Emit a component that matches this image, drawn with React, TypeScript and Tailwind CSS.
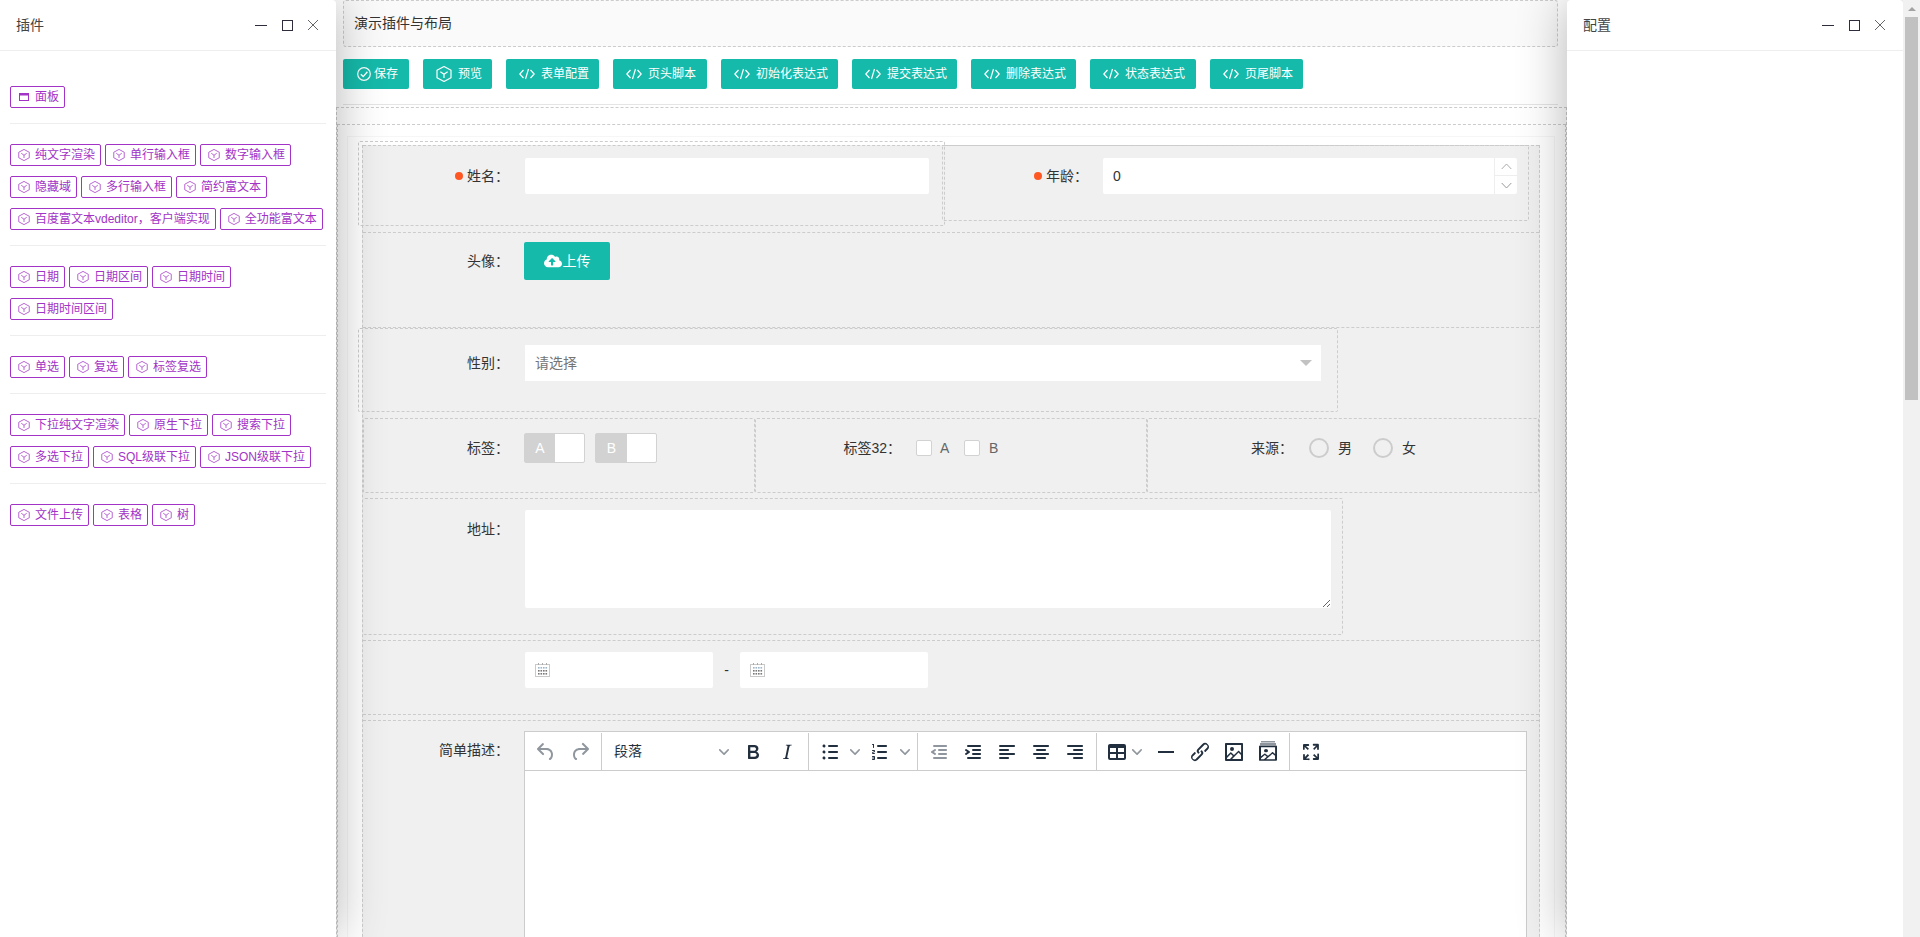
import React from "react";
import { FaCloudUploadAlt } from "react-icons/fa";

const Cube = ({ size = 12, cls = "" }: { size?: number; cls?: string }) => (
  <svg width={size} height={size} viewBox="0 0 24 24" fill="none" stroke="currentColor" strokeWidth={size > 12 ? 1.8 : 1.5} strokeLinejoin="round" className={`shrink-0 ${cls}`}>
    <path d="M12 .8 22.5 6.5v11L12 23.2 1.5 17.5v-11z" />
    <path d="M6.5 8.5 12 12.5l5.5-4M12 12.5V18" />
  </svg>
);

const PanelIcon = () => (
  <svg width="12" height="12" viewBox="0 0 12 12" fill="none" className="shrink-0">
    <rect x="1.5" y="2.5" width="9" height="7" stroke="currentColor" />
    <rect x="1" y="2" width="10" height="2.5" fill="currentColor" />
  </svg>
);

const CodeIcon = () => (
  <svg width="16" height="12" viewBox="0 0 16 12" fill="none" stroke="white" strokeWidth="1.2" className="shrink-0">
    <path d="M4.5 2 .8 6l3.7 4M11.5 2l3.7 4-3.7 4M9.5 1 6.5 11" />
  </svg>
);

const CheckCircle = () => (
  <svg width="14" height="14" viewBox="0 0 14 14" fill="none" stroke="white" strokeWidth="1.2" className="shrink-0">
    <circle cx="7" cy="7" r="6.3" />
    <path d="M3.8 7.2 6.2 9.6 10.4 4.8" strokeWidth="1.4" />
  </svg>
);

const Calendar = () => (
  <svg width="15" height="14" viewBox="0 0 15 14" className="shrink-0">
    <rect x="0.5" y="1.5" width="14" height="12" fill="#fff" stroke="#c9c9c9" />
    <rect x="3" y="0" width="1" height="2" fill="#aaa" />
    <rect x="7" y="0" width="1" height="2" fill="#aaa" />
    <rect x="11" y="0" width="1" height="2" fill="#aaa" />
    {[4, 7, 10].map((y) =>
      [3, 5.5, 8, 10.5].map((x) => <rect key={`${x}-${y}`} x={x} y={y} width="1.6" height="1.6" fill={y === 4 ? "#9fb6c9" : "#777"} />)
    )}
  </svg>
);

const WindowControls = () => (
  <div className="flex items-center">
    <span className="w-[12px] h-[1px] bg-[#2e2d3c]" />
    <span className="ml-[15px] w-[11px] h-[11px] border border-[#2e2d3c]" />
    <svg width="12" height="12" viewBox="0 0 12 12" className="ml-[14px]" stroke="#666" strokeWidth="1" fill="none">
      <path d="M1 1l10 10M11 1 1 11" />
    </svg>
  </div>
);

const PanelHeader = ({ title }: { title: string }) => (
  <div className="h-[51px] shrink-0 border-b border-[#eee] flex items-center justify-between pl-[16px] pr-[17px] text-[14px] text-[#444]">
    <span>{title}</span>
    <WindowControls />
  </div>
);

const Plugin = ({ name, panel }: { name: string; panel?: boolean }) => (
  <div className="h-[22px] flex items-center border border-[#a233c6] rounded-[2px] pl-[7px] pr-[5px] text-[12px] leading-none text-[#a233c6] whitespace-nowrap">
    {panel ? <PanelIcon /> : <Cube />}
    <span className="ml-[5px]">{name}</span>
  </div>
);

const groups = [
  ["纯文字渲染", "单行输入框", "数字输入框", "隐藏域", "多行输入框", "简约富文本", "百度富文本vdeditor，客户端实现", "全功能富文本"],
  ["日期", "日期区间", "日期时间", "日期时间区间"],
  ["单选", "复选", "标签复选"],
  ["下拉纯文字渲染", "原生下拉", "搜索下拉", "多选下拉", "SQL级联下拉", "JSON级联下拉"],
  ["文件上传", "表格", "树"],
];

const ToolButton = ({ label, icon, cls }: { label: string; icon: React.ReactNode; cls: string }) => (
  <button className={`h-[30px] shrink-0 flex items-center bg-[#16baaa] rounded-[2px] text-white text-[12px] whitespace-nowrap ${cls}`}>
    {icon}
    <span>{label}</span>
  </button>
);

const Label = ({ text, cls, required }: { text: string; cls: string; required?: boolean }) => (
  <div className={`flex items-center justify-end shrink-0 text-[14px] text-[#333] ${cls}`}>
    {required && <span className="w-[8px] h-[8px] rounded-full bg-[#ff5722] mr-[4px]" />}
    <span>{text}</span>
  </div>
);

const paths = {
  undo: "M6.4 8H12c3.7 0 6.2 2 6.8 5.1.6 2.7-.4 5.6-2.3 6.8a1 1 0 0 1-1-1.8c1.1-.6 1.8-2.7 1.4-4.6-.5-2.1-2.1-3.5-4.9-3.5H6.4l3.3 3.3a1 1 0 1 1-1.4 1.4l-5-5a1 1 0 0 1 0-1.4l5-5a1 1 0 0 1 1.4 1.4L6.4 8z",
  redo: "M17.6 10H12c-2.8 0-4.4 1.4-4.9 3.5-.4 2 .3 4 1.4 4.6a1 1 0 1 1-1 1.8c-2-1.2-2.9-4.1-2.3-6.8.6-3 3-5.1 6.8-5.1h5.6l-3.3-3.3a1 1 0 1 1 1.4-1.4l5 5a1 1 0 0 1 0 1.4l-5 5a1 1 0 0 1-1.4-1.4l3.3-3.3z",
  bold: "M7.8 19c-.3 0-.5 0-.6-.2l-.2-.5V5.7c0-.2 0-.4.2-.5l.6-.2h5c1.5 0 2.7.3 3.5 1 .7.6 1.1 1.4 1.1 2.5a3 3 0 0 1-.6 1.9c-.4.6-1 1-1.6 1.2.4.1.9.3 1.3.6s.8.7 1 1.2c.4.4.5 1 .5 1.6 0 1.3-.4 2.3-1.3 3-.8.7-2.1 1-3.8 1H7.8zm5-8.3c.6 0 1.2-.1 1.6-.5.4-.3.6-.7.6-1.3 0-1.1-.8-1.7-2.3-1.7H9.3v3.5h3.4zm.5 6c.7 0 1.3-.1 1.7-.4.4-.4.6-.9.6-1.5s-.2-1-.7-1.4c-.4-.3-1-.4-2-.4H9.4v3.8h4z",
  italic: "M16.7 4.7l-.1.9h-.3c-.6 0-1 0-1.4.3-.3.3-.4.6-.5 1.1l-2.1 9.8v.6c0 .5.4.8 1.4.8h.2l-.2.8H8l.2-.8h.2c1.1 0 1.8-.5 2-1.5l2-9.8.1-.5c0-.6-.4-.8-1.4-.8h-.3l.2-.9h5.8z",
  ul: "M11 5h8c.6 0 1 .4 1 1s-.4 1-1 1h-8a1 1 0 0 1 0-2zm0 6h8c.6 0 1 .4 1 1s-.4 1-1 1h-8a1 1 0 0 1 0-2zm0 6h8c.6 0 1 .4 1 1s-.4 1-1 1h-8a1 1 0 0 1 0-2zM4.5 6c0-.4.1-.8.4-1 .3-.4.7-.5 1.1-.5.4 0 .8.1 1 .4.4.3.5.7.5 1.1 0 .4-.1.8-.4 1-.3.4-.7.5-1.1.5-.4 0-.8-.1-1-.4-.4-.3-.5-.7-.5-1.1zm0 6c0-.4.1-.8.4-1 .3-.4.7-.5 1.1-.5.4 0 .8.1 1 .4.4.3.5.7.5 1.1 0 .4-.1.8-.4 1-.3.4-.7.5-1.1.5-.4 0-.8-.1-1-.4-.4-.3-.5-.7-.5-1.1zm0 6c0-.4.1-.8.4-1 .3-.4.7-.5 1.1-.5.4 0 .8.1 1 .4.4.3.5.7.5 1.1 0 .4-.1.8-.4 1-.3.4-.7.5-1.1.5-.4 0-.8-.1-1-.4-.4-.3-.5-.7-.5-1.1z",
  ol: "M10 17h8c.6 0 1 .4 1 1s-.4 1-1 1h-8a1 1 0 0 1 0-2zm0-6h8c.6 0 1 .4 1 1s-.4 1-1 1h-8a1 1 0 0 1 0-2zm0-6h8c.6 0 1 .4 1 1s-.4 1-1 1h-8a1 1 0 1 1 0-2zM6 4v3.5c0 .3-.2.5-.5.5a.5.5 0 0 1-.5-.5V5h-.5a.5.5 0 0 1 0-1H6zm-1 8.8l.2.2h1.3c.3 0 .5.2.5.5s-.2.5-.5.5H4.9a1 1 0 0 1-.9-1V13c0-.4.3-.8.6-1l1.2-.4.2-.3a.2.2 0 0 0-.2-.2H4.5a.5.5 0 0 1-.5-.5c0-.3.2-.5.5-.5h1.6c.5 0 .9.4.9 1v.1c0 .4-.3.8-.6 1l-1.2.4-.2.3zM7 17v2c0 .6-.4 1-1 1H4.5a.5.5 0 0 1 0-1h1.2c.2 0 .3-.1.3-.3 0-.2-.1-.3-.3-.3H4.4a.4.4 0 1 1 0-.8h1.3c.2 0 .3-.1.3-.3 0-.2-.1-.3-.3-.3H4.5a.5.5 0 1 1 0-1H6c.6 0 1 .4 1 1z",
  outdent: "M7 5h12c.6 0 1 .4 1 1s-.4 1-1 1H7a1 1 0 1 1 0-2zm5 4h7c.6 0 1 .4 1 1s-.4 1-1 1h-7a1 1 0 0 1 0-2zm0 4h7c.6 0 1 .4 1 1s-.4 1-1 1h-7a1 1 0 0 1 0-2zm-5 4h12a1 1 0 0 1 0 2H7a1 1 0 0 1 0-2zm1.6-3.8a1 1 0 0 1-1.2 1.6l-3-2a1 1 0 0 1 0-1.6l3-2a1 1 0 0 1 1.2 1.6L6.8 12l1.8 1.2z",
  indent: "M7 5h12c.6 0 1 .4 1 1s-.4 1-1 1H7a1 1 0 1 1 0-2zm5 4h7c.6 0 1 .4 1 1s-.4 1-1 1h-7a1 1 0 0 1 0-2zm0 4h7c.6 0 1 .4 1 1s-.4 1-1 1h-7a1 1 0 0 1 0-2zm-5 4h12a1 1 0 0 1 0 2H7a1 1 0 0 1 0-2zm-2.6-3.8L6.2 12l-1.8-1.2a1 1 0 0 1 1.2-1.6l3 2a1 1 0 0 1 0 1.6l-3 2a1 1 0 1 1-1.2-1.6z",
  left: "M5 5h14c.6 0 1 .4 1 1s-.4 1-1 1H5a1 1 0 1 1 0-2zm0 4h8c.6 0 1 .4 1 1s-.4 1-1 1H5a1 1 0 1 1 0-2zm0 8h8c.6 0 1 .4 1 1s-.4 1-1 1H5a1 1 0 0 1 0-2zm0-4h14c.6 0 1 .4 1 1s-.4 1-1 1H5a1 1 0 0 1 0-2z",
  center: "M5 5h14c.6 0 1 .4 1 1s-.4 1-1 1H5a1 1 0 1 1 0-2zm3 4h8c.6 0 1 .4 1 1s-.4 1-1 1H8a1 1 0 1 1 0-2zm0 8h8c.6 0 1 .4 1 1s-.4 1-1 1H8a1 1 0 0 1 0-2zm-3-4h14c.6 0 1 .4 1 1s-.4 1-1 1H5a1 1 0 0 1 0-2z",
  right: "M5 5h14c.6 0 1 .4 1 1s-.4 1-1 1H5a1 1 0 1 1 0-2zm6 4h8c.6 0 1 .4 1 1s-.4 1-1 1h-8a1 1 0 0 1 0-2zm0 8h8c.6 0 1 .4 1 1s-.4 1-1 1h-8a1 1 0 0 1 0-2zm-6-4h14c.6 0 1 .4 1 1s-.4 1-1 1H5a1 1 0 0 1 0-2z",
  table: "M19 4a2 2 0 0 1 2 2v12a2 2 0 0 1-2 2H5a2 2 0 0 1-2-2V6c0-1.1.9-2 2-2h14zM5 14v4h6v-4H5zm14 0h-6v4h6v-4zm0-6h-6v4h6V8zM5 12h6V8H5v4z",
  hr: "M4 11h16v2H4z",
  link: "M6.2 12.3a1 1 0 0 1 1.4 1.4l-2 2a2 2 0 1 0 2.6 2.8l4.8-4.8a1 1 0 0 0 0-1.4 1 1 0 1 1 1.4-1.3 2.9 2.9 0 0 1 0 4L9.6 20a3.9 3.9 0 0 1-5.5-5.5l2-2zm11.6-.6a1 1 0 0 1-1.4-1.4l2-2a2 2 0 1 0-2.6-2.8L11 10.3a1 1 0 0 0 0 1.4 1 1 0 1 1-1.4 1.3 2.9 2.9 0 0 1 0-4L14.4 4a3.9 3.9 0 0 1 5.5 5.5l-2 2z",
  image: "M5 15.7l3.3-3.2c.3-.3.7-.3 1 0L12 15l4.1-4c.3-.4.8-.4 1 0l2 1.9V5H5v10.7zM5 18V19h3l2.8-2.9-2-2L5 17.9zm14-3l-2.5-2.4-6.4 6.5H19v-4zM4 3h16c.6 0 1 .4 1 1v16c0 .6-.4 1-1 1H4a1 1 0 0 1-1-1V4c0-.6.4-1 1-1zm6 8a2 2 0 1 0 0-4 2 2 0 0 0 0 4z",
  full: "M15.3 10l-1.2-1.3 2.9-3h-2.3a.9.9 0 1 1 0-1.9H19c.5 0 .9.4.9.9v4.4a.9.9 0 1 1-1.8 0V7l-2.9 3zm0 4l3 3v-2.3a.9.9 0 1 1 1.7 0V19c0 .5-.4.9-.9.9h-4.4a.9.9 0 1 1 0-1.8H17l-3-2.9 1.3-1.3zM10 15.4l-2.9 3h2.3a.9.9 0 1 1 0 1.7H5a.9.9 0 0 1-.9-.9v-4.4a.9.9 0 1 1 1.8 0V17l2.9-3 1.2 1.3zM8.7 10L5.7 7v2.3a.9.9 0 0 1-1.7 0V5c0-.5.4-.9.9-.9h4.4a.9.9 0 0 1 0 1.8H7l3 2.9L8.7 10z",
};

const Glyph = ({ d, off }: { d: string; off?: boolean }) => (
  <svg width="24" height="24" viewBox="0 0 24 24" fill="#222f3e" className={`shrink-0 ${off ? "opacity-50" : ""}`}>
    <path d={d} fillRule="evenodd" />
  </svg>
);

const Btn = ({ d, off }: { d: string; off?: boolean }) => (
  <div className="w-[34px] h-full flex items-center justify-center shrink-0">
    <Glyph d={d} off={off} />
  </div>
);

const Chevron = () => (
  <svg width="10" height="10" viewBox="0 0 10 10" fill="#222f3e" className="opacity-50 shrink-0">
    <path d="M8.7 2.2c.3-.3.8-.3 1 0 .4.4.4.9 0 1.2L5.7 7.8c-.3.3-.9.3-1.2 0L.2 3.4a.8.8 0 0 1 0-1.2c.3-.3.8-.3 1.1 0L5 6l3.7-3.8z" />
  </svg>
);

const EditorToolbar = () => (
  <div className="h-[38px] flex border-b border-[#ccc]">
    <div className="flex h-full pl-[4px] pr-[4px] border-r border-[#ccc]">
      <Btn d={paths.undo} off />
      <Btn d={paths.redo} off />
    </div>
    <div className="flex h-full px-[4px] border-r border-[#ccc]">
      <div className="w-[130px] flex items-center justify-between pl-[8px] pr-[7px] text-[14px] text-[#222f3e]">
        <span>段落</span>
        <Chevron />
      </div>
      <Btn d={paths.bold} />
      <Btn d={paths.italic} />
    </div>
    <div className="flex h-full pl-[4px] pr-[4px] border-r border-[#ccc]">
      <div className="w-[51px] flex items-center pl-[5px]">
        <Glyph d={paths.ul} />
        <span className="ml-[8px] flex"><Chevron /></span>
      </div>
      <div className="w-[49px] flex items-center pl-[4px]">
        <Glyph d={paths.ol} />
        <span className="ml-[8px] flex"><Chevron /></span>
      </div>
    </div>
    <div className="flex h-full px-[4px] border-r border-[#ccc]">
      <Btn d={paths.outdent} off />
      <Btn d={paths.indent} />
      <Btn d={paths.left} />
      <Btn d={paths.center} />
      <Btn d={paths.right} />
    </div>
    <div className="flex h-full px-[4px] border-r border-[#ccc]">
      <div className="w-[48px] flex items-center pl-[4px]">
        <Glyph d={paths.table} />
        <span className="ml-[3px] flex"><Chevron /></span>
      </div>
      <Btn d={paths.hr} />
      <Btn d={paths.link} />
      <Btn d={paths.image} />
      <div className="w-[34px] h-full flex items-center justify-center shrink-0">
        <svg width="24" height="24" viewBox="0 0 24 24" fill="#222f3e" className="shrink-0">
          <path d="M5 1.5h14v.8H5zM4 3.6h16v.8H4z" />
          <path transform="translate(0 3) scale(1 .85)" d={paths.image} fillRule="evenodd" />
        </svg>
      </div>
    </div>
    <div className="flex h-full px-[4px]">
      <Btn d={paths.full} />
    </div>
  </div>
);

export default function App() {
  return (
    <div className="w-[1920px] h-[937px] overflow-hidden flex bg-white text-[#333] text-[14px] [font-family:'Liberation_Sans','Noto_Sans_CJK_SC',sans-serif]">
      <aside className="relative z-10 w-[336px] shrink-0 h-full flex flex-col bg-white rounded-tr-[4px] shadow-[0_0_50px_rgba(0,0,0,0.3)]">
        <PanelHeader title="插件" />
        <div className="px-[10px] pt-[35px]">
          <div className="flex">
            <Plugin name="面板" panel />
          </div>
          {groups.map((g, i) => (
            <div key={i}>
              <div className="h-[1px] bg-[#eee] mt-[15px] mb-[20px]" />
              <div className="flex flex-wrap gap-x-[4px] gap-y-[10px]">
                {g.map((n) => (
                  <Plugin key={n} name={n} />
                ))}
              </div>
            </div>
          ))}
        </div>
      </aside>

      <main className="w-[1231px] shrink-0 h-full overflow-hidden">
        <div className="pl-[7px] pr-[9px]">
          <div className="h-[47px] border border-dashed border-[#ccc] rounded-[3px] bg-[#fafafa] flex items-center pl-[10px] text-[14px] text-[#333]">
            演示插件与布局
          </div>
          <div className="mt-[12px] pb-[15px] border-b border-[#e5e5e5] flex gap-[14px]">
            <ToolButton label="保存" cls="w-[66px] pl-[14px] gap-[3px]" icon={<CheckCircle />} />
            <ToolButton label="预览" cls="w-[69px] pl-[13px] gap-[6px]" icon={<Cube size={16} />} />
            <ToolButton label="表单配置" cls="w-[93px] pl-[13px] gap-[6px]" icon={<CodeIcon />} />
            <ToolButton label="页头脚本" cls="w-[94px] pl-[13px] gap-[6px]" icon={<CodeIcon />} />
            <ToolButton label="初始化表达式" cls="w-[117px] pl-[13px] gap-[6px]" icon={<CodeIcon />} />
            <ToolButton label="提交表达式" cls="w-[105px] pl-[13px] gap-[6px]" icon={<CodeIcon />} />
            <ToolButton label="删除表达式" cls="w-[105px] pl-[13px] gap-[6px]" icon={<CodeIcon />} />
            <ToolButton label="状态表达式" cls="w-[106px] pl-[13px] gap-[6px]" icon={<CodeIcon />} />
            <ToolButton label="页尾脚本" cls="w-[93px] pl-[13px] gap-[6px]" icon={<CodeIcon />} />
          </div>
        </div>

        <div className="mt-[2px] border border-dashed border-[#ccc] pt-[16px]">
          <div className="border border-dashed border-[#ccc] pt-[11px] pl-[9px] pr-[10px]">
            <div className="border border-[#f6f6f6] pt-[8px] px-[14px]">
              <div className="bg-[#f0f0f0] border-x border-dashed border-[#ccc]">
                {/* row 1 */}
                <div className="h-[87px] border-t border-dashed border-[#ccc] flex items-start">
                  <div className="-mt-[5px] -ml-[5px] w-[587px] h-[85px] shrink-0 border border-dashed border-[#ccc] rounded-[2px] pt-[16px] flex">
                    <Label text="姓名：" cls="w-[150px] h-[36px]" required />
                    <input readOnly className="ml-[16px] w-[404px] h-[36px] bg-white rounded-[2px] outline-none" />
                  </div>
                  <div className="-mt-[1px] -ml-[3px] w-[587px] h-[76px] shrink-0 border border-dashed border-[#ccc] rounded-[2px] pt-[12px] flex">
                    <Label text="年龄：" cls="w-[145px] h-[36px]" required />
                    <div className="ml-[15px] w-[414px] h-[36px] bg-white rounded-[2px] flex">
                      <input readOnly defaultValue="0" className="flex-1 min-w-0 pl-[10px] text-[14px] text-[#333] bg-transparent outline-none" />
                      <div className="w-[23px] border-l border-[#eee] flex flex-col">
                        <div className="h-[18px] flex items-center justify-center border-b border-[#eee]">
                          <svg width="11" height="7" viewBox="0 0 11 7" fill="none" stroke="#aaa"><path d="M.7 6 5.5 1l4.8 5" /></svg>
                        </div>
                        <div className="flex-1 flex items-center justify-center">
                          <svg width="11" height="7" viewBox="0 0 11 7" fill="none" stroke="#999"><path d="M.7 1l4.8 5 4.8-5" /></svg>
                        </div>
                      </div>
                    </div>
                  </div>
                </div>

                {/* row 2 */}
                <div className="h-[95px] border-t border-dashed border-[#ccc] pt-[9px] flex">
                  <Label text="头像：" cls="w-[146px] h-[38px]" />
                  <button className="ml-[15px] w-[86px] h-[38px] bg-[#16baaa] rounded-[2px] text-white text-[14px] flex items-center justify-center gap-[1px]">
                    <FaCloudUploadAlt size={18} />
                    <span>上传</span>
                  </button>
                </div>

                {/* row 3 */}
                <div className="h-[91px] border-t border-dashed border-[#ccc]">
                  <div className="-ml-[5px] w-[980px] h-[84px] border border-dashed border-[#ccc] rounded-[2px] pt-[16px] flex">
                    <Label text="性别：" cls="w-[150px] h-[36px]" />
                    <div className="ml-[16px] w-[796px] h-[36px] bg-white flex items-center justify-between pl-[10px] pr-[9px] text-[14px] text-[#757575]">
                      <span>请选择</span>
                      <span className="w-0 h-0 border-x-[6px] border-x-transparent border-t-[6px] border-t-[#c2c2c2]" />
                    </div>
                  </div>
                </div>

                {/* row 4 */}
                <div className="h-[75px] mb-[5px] flex">
                  <div className="flex-1 border border-dashed border-[#ccc] rounded-[2px] pt-[14px] flex">
                    <Label text="标签：" cls="w-[145px] h-[30px]" />
                    <div className="ml-[15px] flex gap-[10px]">
                      <div className="w-[61px] h-[30px] border border-[#d2d2d2] rounded-[2px] bg-white flex">
                        <span className="w-[30px] bg-[#d2d2d2] text-white text-[14px] flex items-center justify-center">A</span>
                      </div>
                      <div className="w-[62px] h-[30px] border border-[#d2d2d2] rounded-[2px] bg-white flex">
                        <span className="w-[31px] bg-[#d2d2d2] text-white text-[14px] flex items-center justify-center">B</span>
                      </div>
                    </div>
                  </div>
                  <div className="flex-1 border border-dashed border-[#ccc] rounded-[2px] pt-[14px] flex">
                    <Label text="标签32：" cls="w-[145px] h-[30px]" />
                    <div className="ml-[15px] h-[30px] flex items-center text-[14px] text-[#666]">
                      <span className="w-[16px] h-[16px] bg-white border border-[#d2d2d2] rounded-[2px]" />
                      <span className="ml-[8px] w-[24px]">A</span>
                      <span className="w-[16px] h-[16px] bg-white border border-[#d2d2d2] rounded-[2px]" />
                      <span className="ml-[9px]">B</span>
                    </div>
                  </div>
                  <div className="flex-1 border border-dashed border-[#ccc] rounded-[2px] pt-[14px] flex">
                    <Label text="来源：" cls="w-[145px] h-[30px]" />
                    <div className="ml-[16px] h-[30px] flex items-center text-[14px] text-[#333]">
                      <span className="w-[20px] h-[20px] rounded-full border-2 border-[#ccc]" />
                      <span className="ml-[9px] w-[35px]">男</span>
                      <span className="w-[20px] h-[20px] rounded-full border-2 border-[#ccc]" />
                      <span className="ml-[9px]">女</span>
                    </div>
                  </div>
                </div>

                {/* row 5 */}
                <div className="mb-[5px]">
                  <div className="w-[980px] h-[137px] border-y border-r border-dashed border-[#ccc] rounded-[2px] pt-[11px] flex">
                    <Label text="地址：" cls="w-[146px] h-[38px]" />
                    <textarea readOnly className="ml-[16px] w-[806px] h-[98px] bg-white rounded-[2px] outline-none" />
                  </div>
                </div>

                {/* row 6 */}
                <div className="h-[75px] mb-[5px] border-y border-dashed border-[#ccc] pt-[11px] flex items-start pl-[162px]">
                  <div className="w-[188px] h-[36px] bg-white rounded-[2px] flex items-center pl-[10px]">
                    <Calendar />
                  </div>
                  <span className="w-[27px] h-[36px] flex items-center justify-center text-[14px] text-[#333]">-</span>
                  <div className="w-[188px] h-[36px] bg-white rounded-[2px] flex items-center pl-[10px]">
                    <Calendar />
                  </div>
                </div>

                {/* row 7 */}
                <div className="border-t border-dashed border-[#ccc] pt-[10px] flex">
                  <Label text="简单描述：" cls="w-[146px] h-[38px]" />
                  <div className="ml-[15px] w-[1003px] h-[800px] bg-white border border-[#ccc]">
                    <div className="pt-[1px]">
                      <EditorToolbar />
                    </div>
                  </div>
                </div>
              </div>
            </div>
          </div>
        </div>
      </main>

      <aside className="relative z-10 w-[336px] shrink-0 h-full flex flex-col bg-white rounded-t-[4px] shadow-[0_0_50px_rgba(0,0,0,0.3)]">
        <PanelHeader title="配置" />
      </aside>

      <div className="relative z-20 w-[17px] shrink-0 h-full bg-[#f1f1f1] flex flex-col items-center">
        <div className="h-[17px] w-full flex items-center justify-center">
          <span className="w-0 h-0 border-x-[4px] border-x-transparent border-b-[4px] border-b-[#a3a3a3]" />
        </div>
        <div className="w-[13px] h-[383px] bg-[#c1c1c1]" />
      </div>
    </div>
  );
}
